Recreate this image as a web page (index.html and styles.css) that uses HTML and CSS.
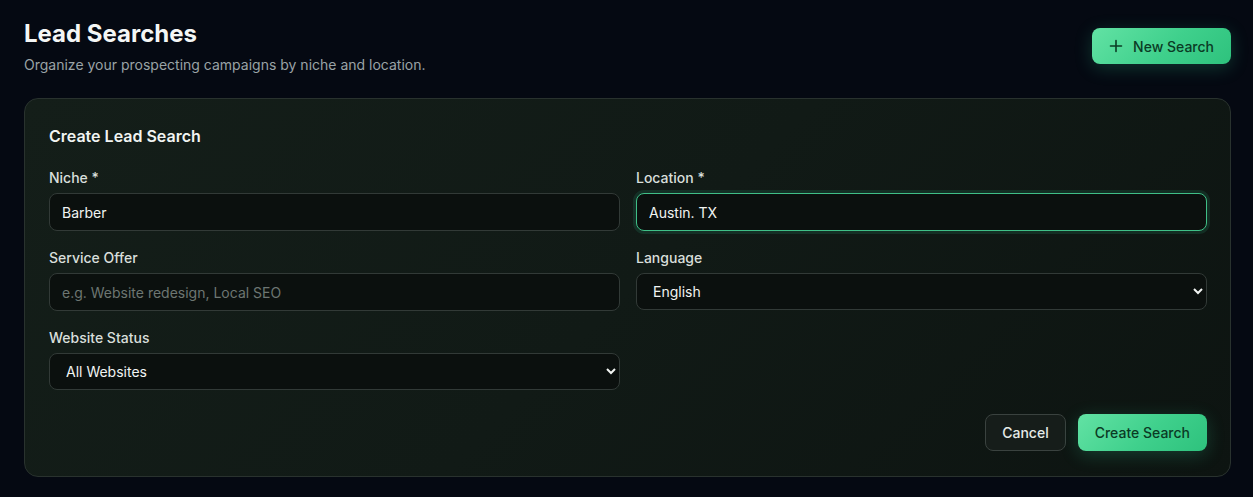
FILE: index.html
```html
<!DOCTYPE html>
<html lang="en">
<head>
    <meta charset="UTF-8">
    <meta name="viewport" content="width=device-width, initial-scale=1.0">
    <title>Lead Searches</title>
    <link rel="stylesheet" href="styles.css">
</head>
<body>

    <!-- Page header -->
    <div class="page-head">
        <div>
            <h1>Lead Searches</h1>
            <p class="subtitle">Organize your prospecting campaigns by niche and location.</p>
        </div>
        <button class="btn btn-primary btn-new">
            <svg width="14" height="14" viewBox="0 0 14 14" fill="none" stroke="currentColor" stroke-width="1.6" stroke-linecap="round">
                <path d="M7 1.5v11M1.5 7h11"/>
            </svg>
            New Search
        </button>
    </div>

    <!-- Create form -->
    <div class="card">
        <h2>Create Lead Search</h2>
        <div class="form-grid">
            <div class="field">
                <label>Niche *</label>
                <input type="text" value="Barber">
            </div>
            <div class="field">
                <label>Location *</label>
                <input type="text" class="focused" value="Austin. TX">
            </div>
            <div class="field">
                <label>Service Offer</label>
                <input type="text" placeholder="e.g. Website redesign, Local SEO">
            </div>
            <div class="field">
                <label>Language</label>
                <select>
                    <option>English</option>
                    <option>Spanish</option>
                </select>
            </div>
            <div class="field">
                <label>Website Status</label>
                <select>
                    <option>All Websites</option>
                    <option>No Website</option>
                    <option>Has Website</option>
                </select>
            </div>
        </div>
        <div class="actions">
            <button class="btn btn-ghost">Cancel</button>
            <button class="btn btn-primary btn-create">Create Search</button>
        </div>
    </div>

</body>
</html>
```

FILE: styles.css
```css
/* Base */
html, body {
    margin: 0;
    padding: 0;
    background-color: #050912;
    color: #f3f5f4;
    font-family: Inter, "Noto Sans", sans-serif;
}

body {
    padding: 20px 22px 20px 24px;
    box-sizing: border-box;
    height: 497px;
    overflow: hidden;
}

/* Header */
.page-head {
    display: flex;
    justify-content: space-between;
    align-items: flex-start;
    margin-bottom: 24px;
}

.page-head h1 {
    margin: 0;
    font-size: 24px;
    line-height: 28px;
    font-weight: 700;
    color: #f4f6f5;
}

.subtitle {
    margin: 8px 0 0;
    font-size: 14px;
    line-height: 18px;
    color: #9aa3a6;
}

/* Buttons */
.btn {
    font-family: inherit;
    font-size: 14px;
    font-weight: 500;
    height: 37px;
    padding: 0 16px;
    border-radius: 8px;
    cursor: pointer;
    display: inline-flex;
    align-items: center;
    gap: 10px;
}

.btn-primary {
    border: none;
    color: #0b3b25;
    background: linear-gradient(135deg, #62e2a4 0%, #3fd08c 55%, #2ec27d 100%);
    box-shadow: 0 4px 18px rgba(52, 211, 153, 0.22);
}

.btn-new {
    height: 36px;
    margin-top: 8px;
    padding: 0 17px;
}

.btn-create {
    padding: 0 17px;
}

.btn-ghost {
    background: #161d1a;
    border: 1px solid #3a423f;
    color: #e6ebe8;
}

/* Card */
.card {
    background: linear-gradient(135deg, #141e19 0%, #111a16 50%, #0d1411 100%);
    border: 1px solid #29322e;
    border-radius: 14px;
    padding: 24px 23px 25px 24px;
}

.card h2 {
    margin: 3px 0 24px;
    font-size: 16px;
    line-height: 20px;
    font-weight: 600;
    color: #f1f4f2;
}

.form-grid {
    display: grid;
    grid-template-columns: 1fr 1fr;
    column-gap: 16px;
    row-gap: 19px;
}

.field {
    display: flex;
    flex-direction: column;
    gap: 7px;
}

.field label {
    font-size: 14px;
    line-height: 16px;
    font-weight: 500;
    color: #d9dfdb;
}

.field input,
.field select {
    font-family: inherit;
    font-size: 14px;
    height: 38px;
    box-sizing: border-box;
    padding: 0 12px;
    border-radius: 8px;
    border: 1px solid #323a37;
    background: #0b100e;
    color: #f1f4f2;
    outline: none;
}

.field select {
    height: 37px;
    padding: 0 12px;
}

.field input::placeholder {
    color: #6d7672;
}

.field input.focused {
    border-color: #3fbf87;
    box-shadow: 0 0 0 3px rgba(52, 211, 153, 0.12);
}

.actions {
    display: flex;
    justify-content: flex-end;
    gap: 12px;
    margin-top: 24px;
}
```
